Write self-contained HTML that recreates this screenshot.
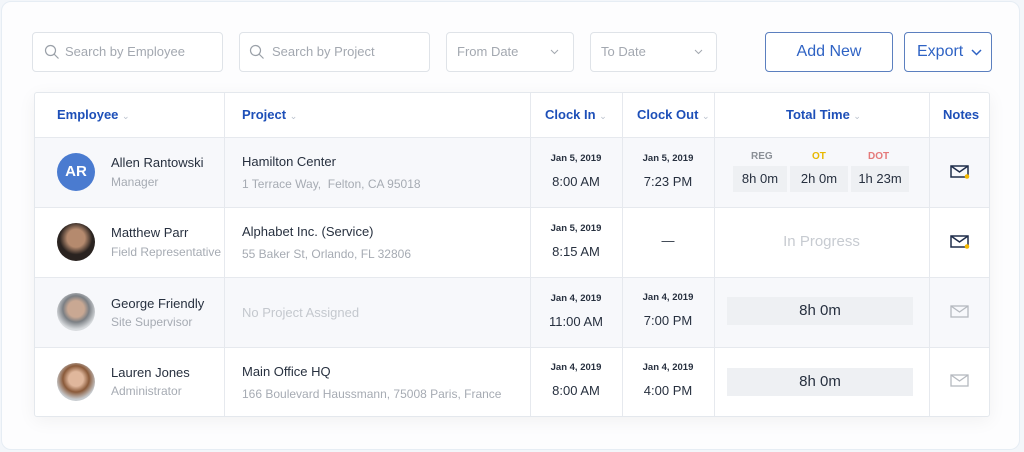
<!DOCTYPE html>
<html><head><meta charset="utf-8"><style>
*{box-sizing:border-box;margin:0;padding:0}
body{width:1024px;height:452px;background:#f3f6fa;font-family:"Liberation Sans",sans-serif;position:relative;overflow:hidden}
.card{position:absolute;left:1px;top:1px;width:1019px;height:449px;background:#fdfdfe;border:1px solid #e6edf4;border-radius:10px}
.inp{position:absolute;top:32px;height:40px;border:1px solid #dfe3e8;border-radius:4px;background:#fff;color:#a3a8b0;font-size:13px;line-height:38px}
.btn{position:absolute;top:32px;height:40px;border:1.5px solid #5b7fbf;border-radius:4px;color:#2f63c4;font-size:16px;line-height:37px;text-align:center;background:#fff}
.a{position:absolute}
.tbl{position:absolute;left:34px;top:92px;width:956px;height:325px;background:#fff;border:1px solid #e4e8ed;border-radius:3px;box-shadow:0 4px 18px rgba(0,0,0,.05)}
.vl{position:absolute;top:0;bottom:0;width:1px;background:#e6e9ee}
.hl{position:absolute;left:0;right:0;height:1px;background:#e6e9ee}
.sh{position:absolute;left:0;right:0;height:70px;background:#f7f8fb}
.h{position:absolute;top:0;height:44px;line-height:44px;color:#1d4fb8;font-size:13px;font-weight:bold}
.car{color:#b9c0cc;font-weight:normal;font-size:9px}
.nm{position:absolute;font-size:13px;color:#27303f}
.sub{position:absolute;font-size:12px;color:#a6abb3}
.dt{position:absolute;font-size:9.5px;font-weight:bold;color:#27303f;text-align:center;width:92px}
.tm{position:absolute;font-size:13px;color:#27303f;text-align:center;width:92px}
.av{position:absolute;left:22px;width:38px;height:38px;border-radius:50%}
.pill{position:absolute;background:#eef0f3;height:26px;line-height:26px;text-align:center;font-size:13px;color:#27303f}
</style></head><body>
<div class="card"></div>
<div class="inp" style="left:32px;width:191px"><svg class="a" style="left:11px;top:11px" width="16" height="16" viewBox="0 0 16 16"><circle cx="6.5" cy="6.5" r="5" fill="none" stroke="#9aa0a8" stroke-width="1.2"/><path d="M10 10l4.5 4.5" stroke="#9aa0a8" stroke-width="1.2"/></svg><span class="a" style="left:32px">Search by Employee</span></div>
<div class="inp" style="left:239px;width:191px"><svg class="a" style="left:9px;top:11px" width="16" height="16" viewBox="0 0 16 16"><circle cx="6.5" cy="6.5" r="5" fill="none" stroke="#9aa0a8" stroke-width="1.2"/><path d="M10 10l4.5 4.5" stroke="#9aa0a8" stroke-width="1.2"/></svg><span class="a" style="left:32px">Search by Project</span></div>
<div class="inp" style="left:446px;width:128px"><span class="a" style="left:10px">From Date</span><svg class="a" style="left:103px;top:16px" width="9" height="6"><path d="M1 1l3.5 3.5L8 1" fill="none" stroke="#a3a8b0"/></svg></div>
<div class="inp" style="left:590px;width:127px"><span class="a" style="left:10px">To Date</span><svg class="a" style="left:103px;top:16px" width="9" height="6"><path d="M1 1l3.5 3.5L8 1" fill="none" stroke="#a3a8b0"/></svg></div>
<div class="btn" style="left:765px;width:128px">Add New</div>
<div class="btn" style="left:904px;width:88px;text-align:left;padding-left:12px">Export<svg class="a" style="left:66px;top:16px" width="11" height="7"><path d="M1 1l4.5 4.5L10 1" fill="none" stroke="#2f63c4" stroke-width="1.5"/></svg></div>

<div class="tbl">
<div class="sh" style="top:44px"></div>
<div class="sh" style="top:184px"></div>
<div class="hl" style="top:44px"></div><div class="hl" style="top:114px"></div><div class="hl" style="top:184px"></div><div class="hl" style="top:254px"></div>
<div class="vl" style="left:189px"></div><div class="vl" style="left:495px"></div><div class="vl" style="left:587px"></div><div class="vl" style="left:679px"></div><div class="vl" style="left:894px"></div>
<div class="h" style="left:22px">Employee <span class="car">&#8964;</span></div>
<div class="h" style="left:207px">Project <span class="car">&#8964;</span></div>
<div class="h" style="left:510px">Clock In <span class="car">&#8964;</span></div>
<div class="h" style="left:602px">Clock Out <span class="car">&#8964;</span></div>
<div class="h" style="left:751px">Total Time <span class="car">&#8964;</span></div>
<div class="h" style="left:908px">Notes</div>

<!-- row1 -->
<div class="av" style="top:60px;background:#4a7bd0;color:#fff;font-size:15px;font-weight:bold;text-align:center;line-height:38px">AR</div>
<div class="nm" style="left:76px;top:62px">Allen Rantowski</div><div class="sub" style="left:76px;top:82px">Manager</div>
<div class="nm" style="left:207px;top:61px">Hamilton Center</div><div class="sub" style="left:207px;top:84px">1 Terrace Way,&nbsp; Felton, CA 95018</div>
<div class="dt" style="left:495px;top:60px">Jan 5, 2019</div><div class="tm" style="left:495px;top:81px">8:00 AM</div>
<div class="dt" style="left:587px;top:60px">Jan 5, 2019</div><div class="tm" style="left:587px;top:81px">7:23 PM</div>
<div class="a" style="left:716px;top:58px;font-size:10px;font-weight:bold;color:#8a8f96">REG</div>
<div class="a" style="left:777px;top:58px;font-size:10px;font-weight:bold;color:#e8b800">OT</div>
<div class="a" style="left:833px;top:58px;font-size:10px;font-weight:bold;color:#e57a7a">DOT</div>
<div class="pill" style="left:698px;top:73px;width:54px">8h 0m</div>
<div class="pill" style="left:755px;top:73px;width:58px">2h 0m</div>
<div class="pill" style="left:816px;top:73px;width:58px">1h 23m</div>
<!-- row2 -->
<div class="av" style="top:130px;background:radial-gradient(circle at 50% 40%,#b58a6e 0 30%,#2a2320 55%)"></div>
<div class="nm" style="left:76px;top:132px">Matthew Parr</div><div class="sub" style="left:76px;top:152px">Field Representative</div>
<div class="nm" style="left:207px;top:131px">Alphabet Inc. (Service)</div><div class="sub" style="left:207px;top:154px">55 Baker St, Orlando, FL 32806</div>
<div class="dt" style="left:495px;top:130px">Jan 5, 2019</div><div class="tm" style="left:495px;top:151px">8:15 AM</div>
<div class="tm" style="left:587px;top:140px">—</div>
<div class="a" style="left:679px;width:215px;text-align:center;top:140px;font-size:15px;color:#c7cbd1">In Progress</div>
<!-- row3 -->
<div class="av" style="top:200px;background:radial-gradient(circle at 50% 42%,#c9a893 0 28%,#7b7f84 45%,#d8dbde 70%)"></div>
<div class="nm" style="left:76px;top:203px">George Friendly</div><div class="sub" style="left:76px;top:222px">Site Supervisor</div>
<div class="sub" style="left:207px;top:212px;color:#c4c8ce;font-size:13px">No Project Assigned</div>
<div class="dt" style="left:495px;top:200px">Jan 4, 2019</div><div class="tm" style="left:495px;top:221px">11:00 AM</div>
<div class="dt" style="left:587px;top:199px">Jan 4, 2019</div><div class="tm" style="left:587px;top:220px">7:00 PM</div>
<div class="pill" style="left:692px;top:204px;width:186px;height:28px;line-height:28px;font-size:15px">8h 0m</div>
<!-- row4 -->
<div class="av" style="top:270px;background:radial-gradient(circle at 50% 42%,#e0b79c 0 25%,#8a5a3a 45%,#c8ccd0 70%)"></div>
<div class="nm" style="left:76px;top:272px">Lauren Jones</div><div class="sub" style="left:76px;top:291px">Administrator</div>
<div class="nm" style="left:207px;top:271px">Main Office HQ</div><div class="sub" style="left:207px;top:294px">166 Boulevard Haussmann, 75008 Paris, France</div>
<div class="dt" style="left:495px;top:269px">Jan 4, 2019</div><div class="tm" style="left:495px;top:290px">8:00 AM</div>
<div class="dt" style="left:587px;top:269px">Jan 4, 2019</div><div class="tm" style="left:587px;top:290px">4:00 PM</div>
<div class="pill" style="left:692px;top:275px;width:186px;height:28px;line-height:28px;font-size:15px">8h 0m</div>
<!-- envelopes -->
<svg class="a" style="left:915px;top:72px" width="20" height="14"><rect x="1" y="1" width="17" height="11" fill="none" stroke="#1f2d4a" stroke-width="1.5"/><path d="M1 1l8.5 6L18 1" fill="none" stroke="#1f2d4a" stroke-width="1.5"/><circle cx="17" cy="11.5" r="2.3" fill="#f5b800"/></svg>
<svg class="a" style="left:915px;top:142px" width="20" height="14"><rect x="1" y="1" width="17" height="11" fill="none" stroke="#1f2d4a" stroke-width="1.5"/><path d="M1 1l8.5 6L18 1" fill="none" stroke="#1f2d4a" stroke-width="1.5"/><circle cx="17" cy="11.5" r="2.3" fill="#f5b800"/></svg>
<svg class="a" style="left:915px;top:212px" width="20" height="14"><rect x="1" y="1" width="17" height="11" fill="none" stroke="#b5b9bf" stroke-width="1.3"/><path d="M1 1l8.5 6L18 1" fill="none" stroke="#b5b9bf" stroke-width="1.3"/></svg>
<svg class="a" style="left:915px;top:281px" width="20" height="14"><rect x="1" y="1" width="17" height="11" fill="none" stroke="#b5b9bf" stroke-width="1.3"/><path d="M1 1l8.5 6L18 1" fill="none" stroke="#b5b9bf" stroke-width="1.3"/></svg>
</div>
</body></html>
